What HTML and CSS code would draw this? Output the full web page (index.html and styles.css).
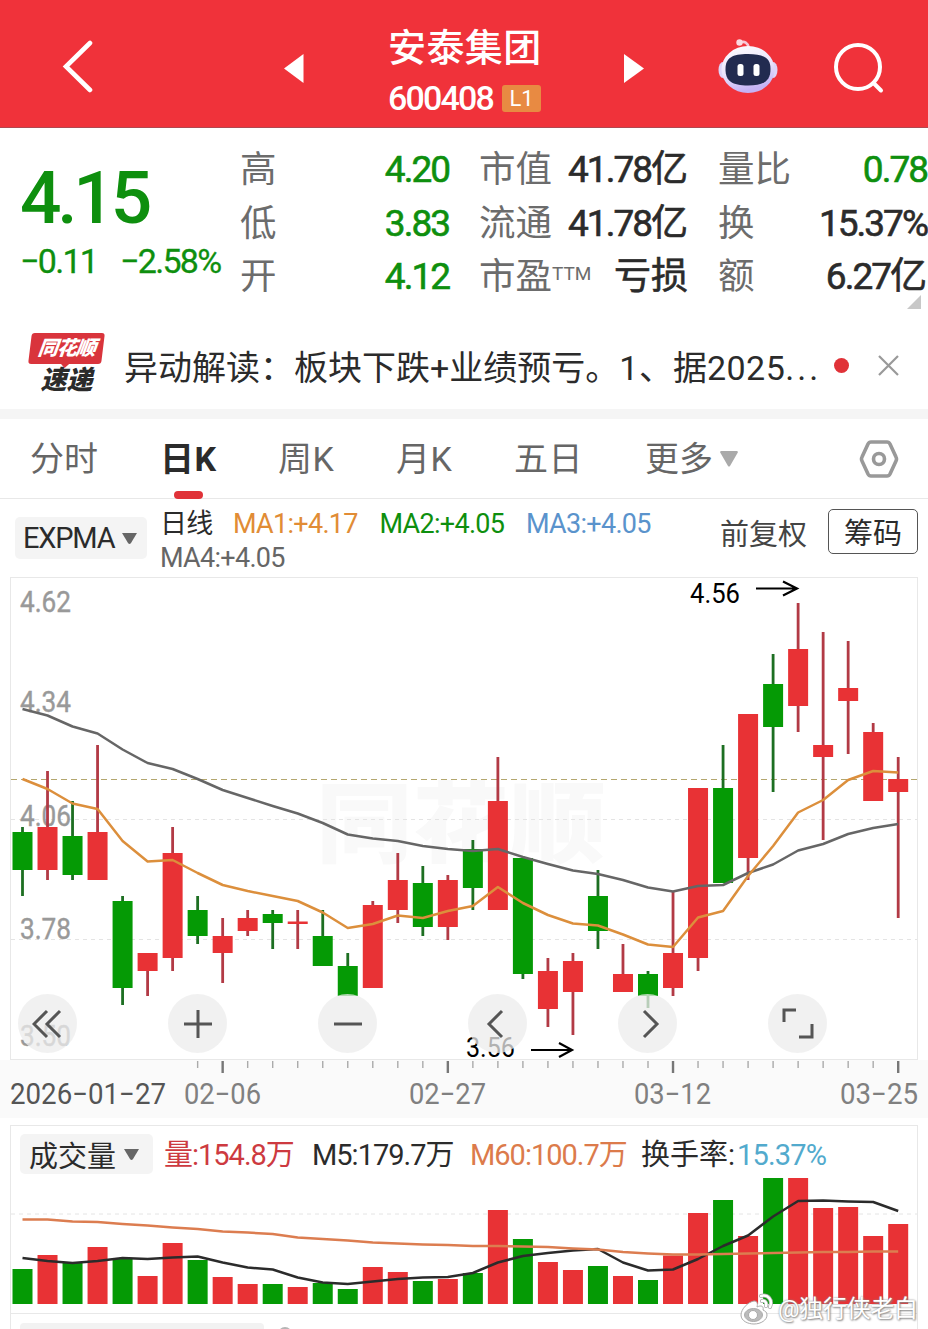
FILE: index.html
```html
<!DOCTYPE html>
<html lang="zh-CN">
<head>
<meta charset="utf-8">
<meta name="viewport" content="width=device-width, initial-scale=1">
<title>安泰集团 600408</title>
<link rel="stylesheet" href="styles.css">
</head>
<body>

<header class="topbar">
  <svg class="back" width="32" height="56" viewBox="0 0 32 56"><path d="M29 5 L5 28.500 L29 52" fill="none" stroke="#fff" stroke-width="4.600" stroke-linecap="round"/></svg>
  <svg class="prev" width="20" height="29" viewBox="0 0 20 29"><path d="M0 14.5 L19.5 0 V29 Z" fill="#fff"/></svg>
  <div class="title">
    <h1>安泰集团</h1>
    <div class="code"><span class="code-num">600408</span><span class="badge">L1</span></div>
  </div>
  <svg class="next" width="20" height="29" viewBox="0 0 20 29"><path d="M20 14.5 L0 0 V29 Z" fill="#fff"/></svg>
  <svg class="robot" width="60" height="56" viewBox="0 0 60 56">
    <defs>
      <linearGradient id="shell" x1="0" y1="0" x2="0.3" y2="1">
        <stop offset="0" stop-color="#fff"/>
        <stop offset="0.6" stop-color="#e9e2fb"/>
        <stop offset="1" stop-color="#c5b2f5"/>
      </linearGradient>
    </defs>
    <path d="M22 4.500 Q29 2 31 10" fill="none" stroke="#f7c6d6" stroke-width="2.600"/>
    <circle cx="21.500" cy="4.500" r="3.200" fill="#fbd9e0"/>
    <ellipse cx="5" cy="32" rx="4.500" ry="8" fill="#ddd4f8"/>
    <ellipse cx="55" cy="32" rx="4.500" ry="8" fill="#ddd4f8"/>
    <ellipse cx="30" cy="31.500" rx="26.500" ry="23.500" fill="url(#shell)"/>
    <path d="M30 16 C46 16 52.500 20 52.500 31 C52.500 43 46 47.500 30 47.500 C14 47.500 7.500 43 7.500 31 C7.500 20 14 16 30 16Z" fill="#222b50"/>
    <rect x="19.500" y="26" width="6" height="12" rx="2.500" fill="#fff"/>
    <rect x="35.500" y="26" width="6" height="12" rx="2.500" fill="#fff"/>
  </svg>
  <svg class="search" width="52" height="52" viewBox="0 0 52 52"><g fill="none" stroke="#fff" stroke-width="4" stroke-linecap="round"><circle cx="25" cy="25" r="22"/><path d="M40.500 41 L48 48.500"/></g></svg>
</header>

<section class="quote">
  <div class="price">
    <div class="last">4.15</div>
    <div class="change"><span class="diff">−0.11</span><span>−2.58%</span></div>
  </div>
  <dl class="stats">
    <div><dt>高</dt><dd class="down">4.20</dd></div>
    <div><dt>市值</dt><dd>41.78<i>亿</i></dd></div>
    <div><dt>量比</dt><dd class="down">0.78</dd></div>
    <div><dt>低</dt><dd class="down">3.83</dd></div>
    <div><dt>流通</dt><dd>41.78<i>亿</i></dd></div>
    <div><dt>换</dt><dd>15.37%</dd></div>
    <div><dt>开</dt><dd class="down">4.12</dd></div>
    <div><dt>市盈<sup>TTM</sup></dt><dd><i>亏损</i></dd></div>
    <div><dt>额</dt><dd>6.27<i>亿</i></dd></div>
  </dl>
  <span class="corner"></span>
</section>

<section class="news">
  <div class="news-logo">
    <span class="brand">同花顺</span>
    <span class="express">速递</span>
  </div>
  <p>异动解读：板块下跌+业绩预亏。<span class="num">1</span>、据<span class="num">2025</span><span class="dots">...</span></p>
  <span class="dot"></span>
  <svg width="21" height="21" viewBox="0 0 21 21"><path d="M1 1 L20 20 M20 1 L1 20" stroke="#999" stroke-width="2.200"/></svg>
</section>

<nav class="tabs">
  <a>分时</a>
  <a class="active">日K</a>
  <a>周K</a>
  <a>月K</a>
  <a>五日</a>
  <a class="more">更多<svg width="18" height="16" viewBox="0 0 18 16"><path d="M1 0 H17 Q18.500 .5 17.500 2 L10 15 Q9 16 8 15 L.5 2 Q-.5 .5 1 0Z" fill="#aaa"/></svg></a>
  <svg class="gear" width="40" height="40" viewBox="0 0 40 40"><g fill="none" stroke="#999" stroke-width="3.600" stroke-linejoin="round"><path d="M12 3 H28 Q30 3 31 5 L37 18 Q38 20 37 22 L31 35 Q30 37 28 37 H12 Q10 37 9 35 L3 22 Q2 20 3 18 L9 5 Q10 3 12 3Z"/><circle cx="20" cy="20" r="5.500"/></g></svg>
</nav>

<section class="indicators">
  <button class="chip expma">EXPMA<svg width="15" height="11" viewBox="0 0 15 11"><path d="M0 0 H15 L9 10 Q7.500 12 6 10Z" fill="#666"/></svg></button>
  <div class="ma">
    <span class="period">日线</span><span class="ma1">MA1:+4.17</span><span class="ma2">MA2:+4.05</span><span class="ma3">MA3:+4.05</span><br>
    <span class="ma4">MA4:+4.05</span>
  </div>
  <span class="adjust">前复权</span>
  <button class="outline">筹码</button>
</section>

<section class="kline">
  <svg id="kline" width="928" height="547" viewBox="0 571 928 547"></svg>
  <div class="tools">
    <button><svg width="32" height="32" viewBox="0 0 32 32"><path d="M15 3 L2 16 L15 29 M28 3 L15 16 L28 29"/></svg></button>
    <button><svg width="32" height="32" viewBox="0 0 32 32"><path d="M16 2 V30 M2 16 H30"/></svg></button>
    <button><svg width="32" height="32" viewBox="0 0 32 32"><path d="M2 16 H30"/></svg></button>
    <button><svg width="32" height="32" viewBox="0 0 32 32"><path d="M20 3 L7 16 L20 29"/></svg></button>
    <button><svg width="32" height="32" viewBox="0 0 32 32"><path d="M12 3 L25 16 L12 29"/></svg></button>
    <button><svg width="32" height="32" viewBox="0 0 32 32"><path d="M2 14 V2 H14 M30 16 V29 H17"/></svg></button>
  </div>
</section>

<section class="volume">
  <div class="legend">
    <button class="chip">成交量<svg width="15" height="11" viewBox="0 0 15 11"><path d="M0 0 H15 L9 10 Q7.500 12 6 10Z" fill="#666"/></svg></button>
    <span class="vol">量:154.8万</span>
    <span class="m5">M5:179.7万</span>
    <span class="m60">M60:100.7万</span>
    <span class="turn">换手率:<b>15.37%</b></span>
  </div>
  <svg id="volume" width="928" height="138" viewBox="0 1176 928 138"></svg>
</section>

<section class="next-panel">
  <span class="chip-cut"></span>
  <span class="info-cut"></span>
</section>

<div class="author">
  <svg width="34" height="32" viewBox="0 0 34 32">
    <g fill="#fff" stroke="#aaa" stroke-width="1">
      <path d="M14 8 C8 9 1 16 1 22 C1 28 8 31 14 31 C21 31 27 27 27 22 C27 19 25 18 23 17 C24 13 21 12 17 14 C18 10 17 8 14 8Z"/>
      <ellipse cx="13.500" cy="22" rx="9" ry="6.500" fill="#bbb"/>
      <circle cx="13" cy="22" r="4.500"/>
    </g>
    <g fill="none" stroke="#aaa" stroke-width="4" stroke-linecap="round"><path d="M21 3 C28 1 33 7 30 14"/><path d="M22 8 C25 7 27 10 26 13"/></g>
    <g fill="none" stroke="#fff" stroke-width="2.500" stroke-linecap="round"><path d="M21 3 C28 1 33 7 30 14"/><path d="M22 8 C25 7 27 10 26 13"/></g>
  </svg>
  <span>@独行侠老白</span>
</div>

<script src="script.js"></script>
</body>
</html>
```
FILE: styles.css
```css
* {
    box-sizing: border-box;
}

body {
    position: relative;
    width: 928px;
    height: 1329px;
    margin: 0;
    overflow: hidden;
    background: #fff;
    color: #2b2b2b;
    font-family: Roboto, "Noto Sans CJK SC", sans-serif;
}

svg {
    display: block;
    flex: none;
}

button {
    padding: 0;
    border: 0;
    color: inherit;
    font-family: inherit;
}

/* header */
.topbar {
    display: flex;
    height: 128px;
    background: #f0323a;
    border-bottom: 1px solid #b04850;
    color: #fff;
}

.back {
    margin: 38px 0 0 61px;
}

.prev {
    margin: 54px 0 0 191px;
}

.title {
    width: 160px;
    margin: 25px 0 0 84px;
}

.title h1 {
    margin: 0;
    font-size: 38px;
    font-weight: 500;
    line-height: 46px;
    letter-spacing: 0.4px;
    white-space: nowrap;
}

.code {
    display: flex;
    align-items: center;
    height: 32px;
    margin-top: 11px;
}

.code-num {
    width: 114px;
    font-size: 34px;
    font-weight: 500;
    letter-spacing: -1.8px;
}

.badge {
    width: 39px;
    height: 27px;
    border-radius: 3px;
    background: #e88a42;
    font-size: 22px;
    line-height: 27px;
    text-align: center;
}

.next {
    margin: 54px 0 0 76px;
}

.robot {
    margin: 38px 0 0 74px;
}

.search {
    margin: 42px 0 0 55px;
}

/* quote */
.quote {
    position: relative;
    display: flex;
    height: 190px;
    color: #2b2b2b;
}

.price {
    width: 241px;
    padding: 27px 0 0 20px;
    color: #0e8f0e;
}

.last {
    font-size: 73px;
    font-weight: 500;
    line-height: 86px;
    letter-spacing: -4.2px;
}

.change {
    display: flex;
    width: 204px;
    font-size: 34px;
    line-height: 40px;
    letter-spacing: -1.7px;
    white-space: nowrap;
    -webkit-text-stroke: 0.3px;
}

.diff {
    width: 100px;
}

.stats {
    display: grid;
    grid-template-columns: repeat(3, 208px);
    grid-auto-rows: 53.5px;
    column-gap: 31px;
    margin: 14px 0 0;
}

.stats div {
    display: flex;
    justify-content: space-between;
    line-height: 55px;
    white-space: nowrap;
}

.stats dt {
    margin-left: -1px;
    color: #6c6c6c;
    font-size: 36.5px;
}

.stats sup {
    font-size: 19px;
    line-height: 0;
    vertical-align: 9px;
}

.stats dd {
    margin: 0;
    font-size: 37px;
    letter-spacing: -2px;
    -webkit-text-stroke: 0.6px;
}

.stats i {
    font-style: normal;
    letter-spacing: 0;
}

.down {
    color: #0e8f0e;
}

.corner {
    position: absolute;
    right: 7px;
    bottom: 9px;
    border-left: 14px solid transparent;
    border-bottom: 14px solid #c8c8c8;
}

/* news strip */
.news {
    display: flex;
    align-items: center;
    height: 101px;
    padding: 3px 29px 0 30px;
    border-bottom: 10px solid #f5f5f5;
}

.news-logo {
    width: 73px;
    margin-top: -1px;
    font-style: italic;
    font-weight: 900;
    text-align: center;
    white-space: nowrap;
}

.brand {
    display: block;
    height: 31px;
    border-radius: 3px;
    background: #d9343c;
    color: #fff;
    font-size: 20px;
    line-height: 30px;
    letter-spacing: -1px;
    transform: skewX(-7deg);
}

.brand::after {
    content: "";
    display: block;
    width: 0;
    margin: 0 auto;
    border: 5px solid transparent;
    border-top-color: #d9343c;
}

.express {
    display: block;
    font-size: 26px;
    line-height: 32px;
}

.news p {
    width: 700px;
    margin: 0 8px 0 21px;
    font-size: 34px;
    white-space: nowrap;
}

.num {
    letter-spacing: 0.5px;
}

.dots {
    letter-spacing: 3px;
}

.dot {
    width: 15px;
    height: 15px;
    margin-left: 2px;
    border-radius: 50%;
    background: #e03238;
}

.news > svg {
    margin-left: auto;
}

/* tabs */
.tabs {
    display: flex;
    align-items: center;
    height: 80px;
    padding: 0 29px 0 30px;
    border-bottom: 1px solid #e8e8e8;
    color: #666;
    font-size: 34px;
    line-height: 82px;
    white-space: nowrap;
}

.tabs a {
    position: relative;
    width: 118px;
    letter-spacing: 0.5px;
}

.tabs a:first-child {
    width: 130px;
    letter-spacing: 0;
}

.tabs .active {
    color: #2b2b2b;
    font-weight: 700;
}

.tabs .active::after {
    content: "";
    position: absolute;
    left: 14px;
    bottom: 1px;
    width: 29px;
    height: 8px;
    border-radius: 4px;
    background: #e03238;
}

.tabs .more {
    display: flex;
    align-items: center;
    gap: 7px;
    margin-left: 13px;
    letter-spacing: 0;
}

.gear {
    margin-left: auto;
}

/* indicator legend */
.indicators {
    display: flex;
    height: 72px;
}

.chip {
    display: flex;
    flex: none;
    align-items: center;
    gap: 8px;
    border-radius: 5px;
    background: #f4f4f4;
}

.expma {
    width: 132px;
    height: 42px;
    margin: 18px 13px 0 15px;
    padding-left: 8px;
    font-size: 29px;
    letter-spacing: -1.2px;
}

.ma {
    width: 546px;
    padding-top: 8px;
    font-size: 27px;
    line-height: 34px;
    letter-spacing: -0.7px;
    white-space: nowrap;
}

.ma span {
    display: inline-block;
    width: 146.5px;
}

.ma .period {
    width: 73px;
}

.ma .ma1 {
    color: #e18c35;
}

.ma .ma2 {
    color: #0e8f0e;
}

.ma .ma3 {
    color: #5a93cc;
}

.ma .ma4 {
    color: #666;
}

.adjust {
    width: 108px;
    margin-left: 14px;
    color: #444;
    font-size: 29px;
    line-height: 73px;
}

.outline {
    width: 90px;
    height: 45px;
    margin-top: 10px;
    padding-top: 4px;
    border: 1px solid #555;
    border-radius: 5px;
    background: #fff;
    font-size: 29px;
    line-height: 41px;
}

/* charts */
.kline {
    position: relative;
    height: 547px;
}

.axis-bg {
    fill: #fafafa;
}

.frame {
    fill: none;
    stroke: #e8e8e8;
}

.grid {
    stroke: #e4e4e4;
    stroke-dasharray: 4 4;
}

.last-line {
    stroke: #b3a66e;
    stroke-dasharray: 6 4;
}

.up-bar {
    fill: #e83235;
}

.down-bar {
    fill: #059a05;
}

.up-wick {
    fill: #b23a45;
}

.down-wick {
    fill: #1d6f22;
}

.line {
    fill: none;
    stroke-width: 2.5;
    stroke-linejoin: round;
}

.brand-mark {
    fill: #f9f9f9;
    font-size: 88px;
    font-weight: 900;
}

.scale {
    fill: #999;
    stroke: #999;
    stroke-width: 0.4px;
    font-size: 29px;
}

.date {
    fill: #808080;
    font-size: 29px;
}

.date-start {
    fill: #555;
}

.peak {
    fill: #000;
    font-size: 27px;
}

.tools {
    position: absolute;
    top: 423px;
    left: 18px;
    display: flex;
    gap: 91px;
}

.tools button {
    display: flex;
    align-items: center;
    justify-content: center;
    width: 59px;
    height: 59px;
    border-radius: 50%;
    background: rgba(236, 236, 236, 0.75);
}

.tools path {
    fill: none;
    stroke: #555;
    stroke-width: 3;
}

.volume {
    height: 196px;
    margin: 7px 10px 0;
    border: 1px solid #e8e8e8;
    border-bottom: 0;
}

.volume .legend {
    display: flex;
    height: 50px;
    padding: 8px 0 0 9px;
    font-size: 29px;
    line-height: 42px;
    letter-spacing: -1px;
    white-space: nowrap;
}

.volume .chip {
    width: 133px;
    height: 40px;
    margin-right: 11px;
    padding-left: 9px;
    font-size: 29px;
    letter-spacing: 0;
}

.volume .vol {
    width: 148px;
    color: #cd3a40;
}

.volume .m5 {
    width: 158px;
}

.volume .m60 {
    width: 171px;
    color: #dc7b4b;
}

.turn {
    letter-spacing: 0;
}

.turn b {
    margin-left: 2px;
    color: #52aacd;
    font-weight: 400;
    letter-spacing: -0.8px;
}

#volume {
    margin-left: -11px;
}

.next-panel {
    display: flex;
    height: 20px;
    margin: -8px 10px 0;
    padding: 9px 0 0 9px;
    border: 1px solid #e8e8e8;
}

.chip-cut {
    width: 244px;
    height: 20px;
    border-radius: 4px;
    background: #f2f2f2;
}

.info-cut {
    width: 14px;
    height: 14px;
    margin: 4px 0 0 14px;
    border-radius: 50%;
    background: #b5b5b5;
}

.author {
    position: absolute;
    left: 740px;
    top: 1291px;
    display: flex;
    align-items: center;
    gap: 4px;
    color: #fff;
    font-size: 24px;
    line-height: 36px;
    letter-spacing: -0.3px;
    text-shadow: 0 0 2px #888, 1px 1px 2px #888;
    white-space: nowrap;
}
```
FILE: script.js
```js
// [direction, high, body top, body bottom, low, volume top]
const days = [
  ['g', 827, 832, 870, 896, 1269],
  ['r', 771, 827, 870, 880, 1255],
  ['g', 801, 836, 875, 880, 1263],
  ['r', 745, 832, 880, 880, 1247],
  ['g', 896, 901, 988, 1005, 1258],
  ['r', 953, 953, 971, 996, 1276],
  ['r', 827, 853, 958, 971, 1243],
  ['g', 896, 910, 936, 944, 1260],
  ['r', 918, 936, 953, 983, 1277],
  ['r', 910, 918, 931, 936, 1284],
  ['g', 910, 914, 923, 949, 1284],
  ['r', 910, 921.5, 924, 949, 1287],
  ['g', 910, 936, 966, 966, 1283],
  ['g', 953, 966, 996, 996, 1289],
  ['r', 901, 905, 988, 988, 1267],
  ['r', 853, 880, 910, 923, 1272],
  ['g', 866, 883, 927, 936, 1281],
  ['r', 875, 880, 927, 940, 1279],
  ['g', 840, 849, 888, 910, 1273],
  ['r', 757, 801, 910, 910, 1210],
  ['g', 858, 858, 974, 979, 1239],
  ['r', 958, 971, 1009, 1027, 1262],
  ['r', 953, 961, 992, 1035, 1270],
  ['g', 870, 896, 931, 949, 1266],
  ['r', 944, 974, 992, 992, 1276],
  ['g', 971, 974, 996, 1008, 1280],
  ['r', 892, 953, 988, 996, 1255.5],
  ['r', 788, 788, 958, 971, 1213],
  ['g', 745, 788, 883, 883, 1200],
  ['r', 714, 714, 858, 880, 1236],
  ['g', 654, 684, 727, 792, 1178],
  ['r', 603, 649, 706, 732, 1178],
  ['r', 632, 745, 757, 840, 1208],
  ['r', 641, 688, 701, 754, 1207],
  ['r', 723, 732, 801, 801, 1236],
  ['r', 757, 779, 792, 918, 1224]
];

const ma1 = [779, 789, 803.5, 809, 841, 861.5, 860, 873, 885, 891, 896, 901, 912.5, 928, 924, 915.5, 918, 911, 906, 887, 903, 915, 923.5, 925.5, 934.5, 944.5, 947, 917.5, 911, 876, 846, 812.5, 800, 780, 771, 772.5];
const ma4 = [709, 715.5, 726.5, 733.5, 749.5, 763, 769, 779, 790, 798, 806, 813.5, 823, 834.5, 838.5, 841, 846, 849, 851, 849, 857, 864, 870.5, 874, 880, 887.5, 891.5, 886, 885, 873, 864.5, 850.5, 844, 834, 828, 824];
const m5 = [1258, 1261, 1263, 1261, 1258, 1259, 1257.5, 1256.5, 1262.5, 1267.5, 1269.5, 1277.5, 1282.5, 1284, 1281.5, 1279, 1277.5, 1277, 1273, 1262.5, 1256, 1253, 1250.5, 1249, 1262.5, 1270.5, 1269.5, 1259, 1246, 1235.5, 1216.5, 1201, 1200.5, 1201.5, 1202, 1211];
const m60 = [1219.5, 1219.5, 1221.5, 1222, 1224, 1225.5, 1227.5, 1229, 1231.5, 1232.5, 1234, 1237.5, 1239, 1240.5, 1242.5, 1243.5, 1244.5, 1245, 1246, 1246, 1246.5, 1247, 1248.5, 1249.5, 1252, 1253.5, 1254.5, 1254.5, 1254, 1253.5, 1253, 1252.5, 1252, 1252, 1251.5, 1251.5];

const x = i => 22.5 + i * 25.02;

function line(values, color) {
  return `<polyline class="line" stroke="${color}" points="${values.map((y, i) => x(i) + ',' + y).join(' ')}"/>`;
}

function text(cls, left, y, width, str) {
  return `<text class="${cls}" x="${left}" y="${y}" textLength="${width}" lengthAdjust="spacingAndGlyphs">${str}</text>`;
}

function drawKline() {
  let s = '<rect class="axis-bg" x="0" y="1060" width="928" height="58"/>';
  s += text('brand-mark', 316, 855, 290, '同花顺');
  s += '<rect class="frame" x="10.5" y="577.5" width="907" height="482"/>';
  s += '<path class="grid" d="M11 819.5H917M11 939.5H917"/>';
  s += '<path class="last-line" d="M11 779.5H917"/>';
  s += text('scale', 20, 612, 51, '4.62') + text('scale', 20, 712, 51, '4.34');
  s += text('scale', 20, 826, 51, '4.06') + text('scale', 20, 939, 51, '3.78') + text('scale', 20, 1046, 51, '3.50');

  days.forEach(([dir, high, top, bottom, low], i) => {
    const cls = dir === 'r' ? 'up' : 'down';
    s += `<rect class="${cls}-wick" x="${x(i) - 1.4}" y="${high}" width="2.8" height="${low - high}"/>`;
    s += `<rect class="${cls}-bar" x="${x(i) - 10}" y="${top}" width="20" height="${bottom - top}"/>`;
  });
  s += line(ma4, '#666') + line(ma1, '#dc8f3c');

  for (let i = 7; i < 36; i++) {
    const major = i % 9 === 8;
    s += `<rect x="${x(i) - (major ? 1.2 : 0.7)}" y="1061" width="${major ? 2.4 : 1.4}" height="${major ? 12 : 7}" fill="${major ? '#777' : '#aaa'}"/>`;
  }
  s += text('date date-start', 10, 1104, 156, '2026−01−27');
  s += text('date', 184, 1104, 77, '02−06') + text('date', 409, 1104, 77, '02−27');
  s += text('date', 634, 1104, 77, '03−12') + text('date', 840, 1104, 78, '03−25');

  s += text('peak', 690, 603, 50, '4.56') + text('peak', 466, 1057, 49, '3.56');
  s += '<path d="M756 588.5H797M783 581.5L797 588.5L783 595.5M531 1050H572M559 1043L572 1050L559 1057" fill="none" stroke="#000" stroke-width="2.2"/>';
  document.querySelector('#kline').innerHTML = s;
}

function drawVolume() {
  let s = '<path class="grid" d="M11 1214H917"/>';
  days.forEach((d, i) => {
    s += `<rect class="${d[0] === 'r' ? 'up' : 'down'}-bar" x="${x(i) - 10}" y="${d[5]}" width="20" height="${1304 - d[5]}"/>`;
  });
  s += line(m5, '#2b2b2b') + line(m60, '#dc7d50');
  document.querySelector('#volume').innerHTML = s;
}

drawKline();
drawVolume();
```
